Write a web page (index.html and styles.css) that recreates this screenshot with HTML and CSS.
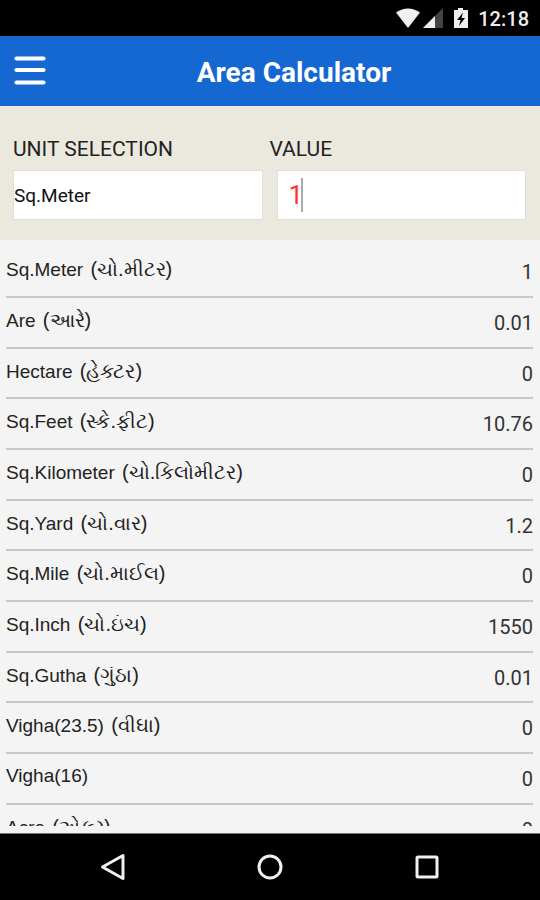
FILE: index.html
```html
<!DOCTYPE html>
<html lang="en">
<head>
<meta charset="utf-8">
<meta name="viewport" content="width=device-width, initial-scale=1">
<title>Area Calculator</title>
<link rel="stylesheet" href="styles.css">
</head>
<body>
<div class="status">
  <svg class="status-icons" width="76" height="24" viewBox="0 0 76 24" aria-hidden="true">
    <path d="M1 5.500Q13 -2.500 25 5.500L13 21Z" fill="#f0f0f0"/>
    <path d="M48 1V21H28Z" fill="#444"/>
    <path d="M40 9V21H28Z" fill="#f0f0f0"/>
    <path d="M63 1h5v2h5v18H59V3h4Z" fill="#f0f0f0"/>
    <path d="M68 5.500L62 13h3.500L64 19l6-8h-3.500Z" fill="#000"/>
  </svg>
  <span class="clock">12:18</span>
</div>
<header class="bar">
  <button class="menu" type="button" aria-label="Menu">
    <svg width="32" height="30" viewBox="0 0 32 30" aria-hidden="true">
      <path d="M2.500 2.500H29.500M2.500 14H29.500M2.500 26.500H29.500" stroke="#fff" stroke-width="4.200" stroke-linecap="round"/>
    </svg>
  </button>
  <h1 class="title">Area Calculator</h1>
</header>
<form class="entry">
  <div class="field">
    <label for="unit">UNIT SELECTION</label>
    <select id="unit" class="control unit"><option>Sq.Meter</option></select>
  </div>
  <div class="field">
    <label for="value">VALUE</label>
    <div class="value-box">
      <input id="value" class="control value" type="text" inputmode="decimal" value="1">
      <span class="caret"></span>
    </div>
  </div>
</form>
<main class="results">
  <dl class="list">
    <div class="row"><dt>Sq.Meter <span lang="gu">(ચો.મીટર)</span></dt><dd>1</dd></div>
    <div class="row"><dt>Are <span lang="gu">(આરે)</span></dt><dd>0.01</dd></div>
    <div class="row"><dt>Hectare <span lang="gu">(હેક્ટર)</span></dt><dd>0</dd></div>
    <div class="row"><dt>Sq.Feet <span lang="gu">(સ્કે.ફીટ)</span></dt><dd>10.76</dd></div>
    <div class="row"><dt>Sq.Kilometer <span lang="gu">(ચો.કિલોમીટર)</span></dt><dd>0</dd></div>
    <div class="row"><dt>Sq.Yard <span lang="gu">(ચો.વાર)</span></dt><dd>1.2</dd></div>
    <div class="row"><dt>Sq.Mile <span lang="gu">(ચો.માઈલ)</span></dt><dd>0</dd></div>
    <div class="row"><dt>Sq.Inch <span lang="gu">(ચો.ઇંચ)</span></dt><dd>1550</dd></div>
    <div class="row"><dt>Sq.Gutha <span lang="gu">(ગુંઠા)</span></dt><dd>0.01</dd></div>
    <div class="row"><dt>Vigha(23.5) <span lang="gu">(વીઘા)</span></dt><dd>0</dd></div>
    <div class="row"><dt>Vigha(16)</dt><dd>0</dd></div>
    <div class="row"><dt>Acre <span lang="gu">(એકર)</span></dt><dd>0</dd></div>
  </dl>
</main>
<nav class="nav" aria-label="System">
  <button type="button" aria-label="Back"><svg width="28" height="28" viewBox="0 0 28 28"><path d="M24 2.500V25.500L3.500 14Z" fill="none" stroke="#f0f0f0" stroke-width="3" stroke-linejoin="round"/></svg></button>
  <button type="button" aria-label="Home"><svg width="28" height="28" viewBox="0 0 28 28"><circle cx="14" cy="14" r="11" fill="none" stroke="#f0f0f0" stroke-width="3"/></svg></button>
  <button type="button" aria-label="Recent apps"><svg width="28" height="28" viewBox="0 0 28 28"><rect x="4" y="4" width="20" height="20" rx="1" fill="none" stroke="#f0f0f0" stroke-width="3"/></svg></button>
</nav>
</body>
</html>
```
FILE: styles.css
```css
* {
  box-sizing: border-box;
}

body {
  margin: 0;
  height: 100vh;
  display: flex;
  flex-direction: column;
  background: #f4f4f4;
  color: #222;
  font-family: Roboto, "Noto Sans", sans-serif;
}

button {
  display: flex;
  padding: 0;
  border: 0;
  background: none;
}

.status {
  flex: none;
  height: 36px;
  display: flex;
  align-items: center;
  justify-content: flex-end;
  gap: 7px;
  padding: 2px 11px 0 0;
  background: #000;
  color: #eee;
}

.clock {
  font-size: 20px;
  font-weight: 500;
  line-height: 24px;
}

.bar {
  flex: none;
  height: 70px;
  display: grid;
  grid-template-columns: 48px 1fr;
  align-items: center;
  padding: 0 0 0 14px;
  background: #1567d1;
  color: #fff;
}

.title {
  margin: 0;
  padding: 4px 14px 0 0;
  text-align: center;
  font-size: 28px;
  line-height: 32px;
  font-weight: 700;
}

.entry {
  flex: none;
  display: grid;
  grid-template-columns: 1fr 1fr;
  gap: 14px;
  padding: 30px 14px 20px 13px;
  background: #ebe9de;
}

.field label {
  display: block;
  margin-bottom: 8px;
  font-size: 21px;
  line-height: 26px;
}

.field + .field label {
  margin-left: -7px;
}

.control {
  display: block;
  width: 100%;
  height: 50px;
  margin: 0;
  border: 1px solid #dedede;
  border-radius: 0;
  background: #fff;
  appearance: none;
  outline: 0;
  font-family: inherit;
}

.unit {
  padding: 0;
  color: #111;
  font-size: 19px;
}

.value {
  padding: 0 11px;
  color: #f33;
  font-size: 26px;
}

.value-box {
  position: relative;
}

.caret {
  position: absolute;
  top: 8px;
  left: 24px;
  width: 2px;
  height: 34px;
  background: #aaa;
}

.results {
  flex: 1;
  min-height: 0;
  padding: 7px 7px 0 6px;
  margin-bottom: 7px;
  overflow: hidden;
}

.list {
  margin: 0;
}

.row {
  height: 51px;
  display: flex;
  justify-content: space-between;
  border-bottom: 2px solid #c8c8c8;
}

.row:nth-child(3n) {
  height: 50px;
}

dt {
  padding-top: 10px;
  color: #222;
  font-family: "Liberation Sans", sans-serif;
  font-size: 19px;
  line-height: 24px;
  white-space: nowrap;
}

dt span {
  margin-left: 2px;
  font-size: 20px;
}

dd {
  margin: 0;
  padding-top: 13px;
  color: #333;
  font-size: 20px;
  line-height: 24px;
}

.nav {
  flex: none;
  height: 67px;
  display: grid;
  grid-template-columns: repeat(3, 1fr);
  place-items: center;
  padding: 0 34px;
  border-top: 1px solid #777;
  background: #000;
}
```
